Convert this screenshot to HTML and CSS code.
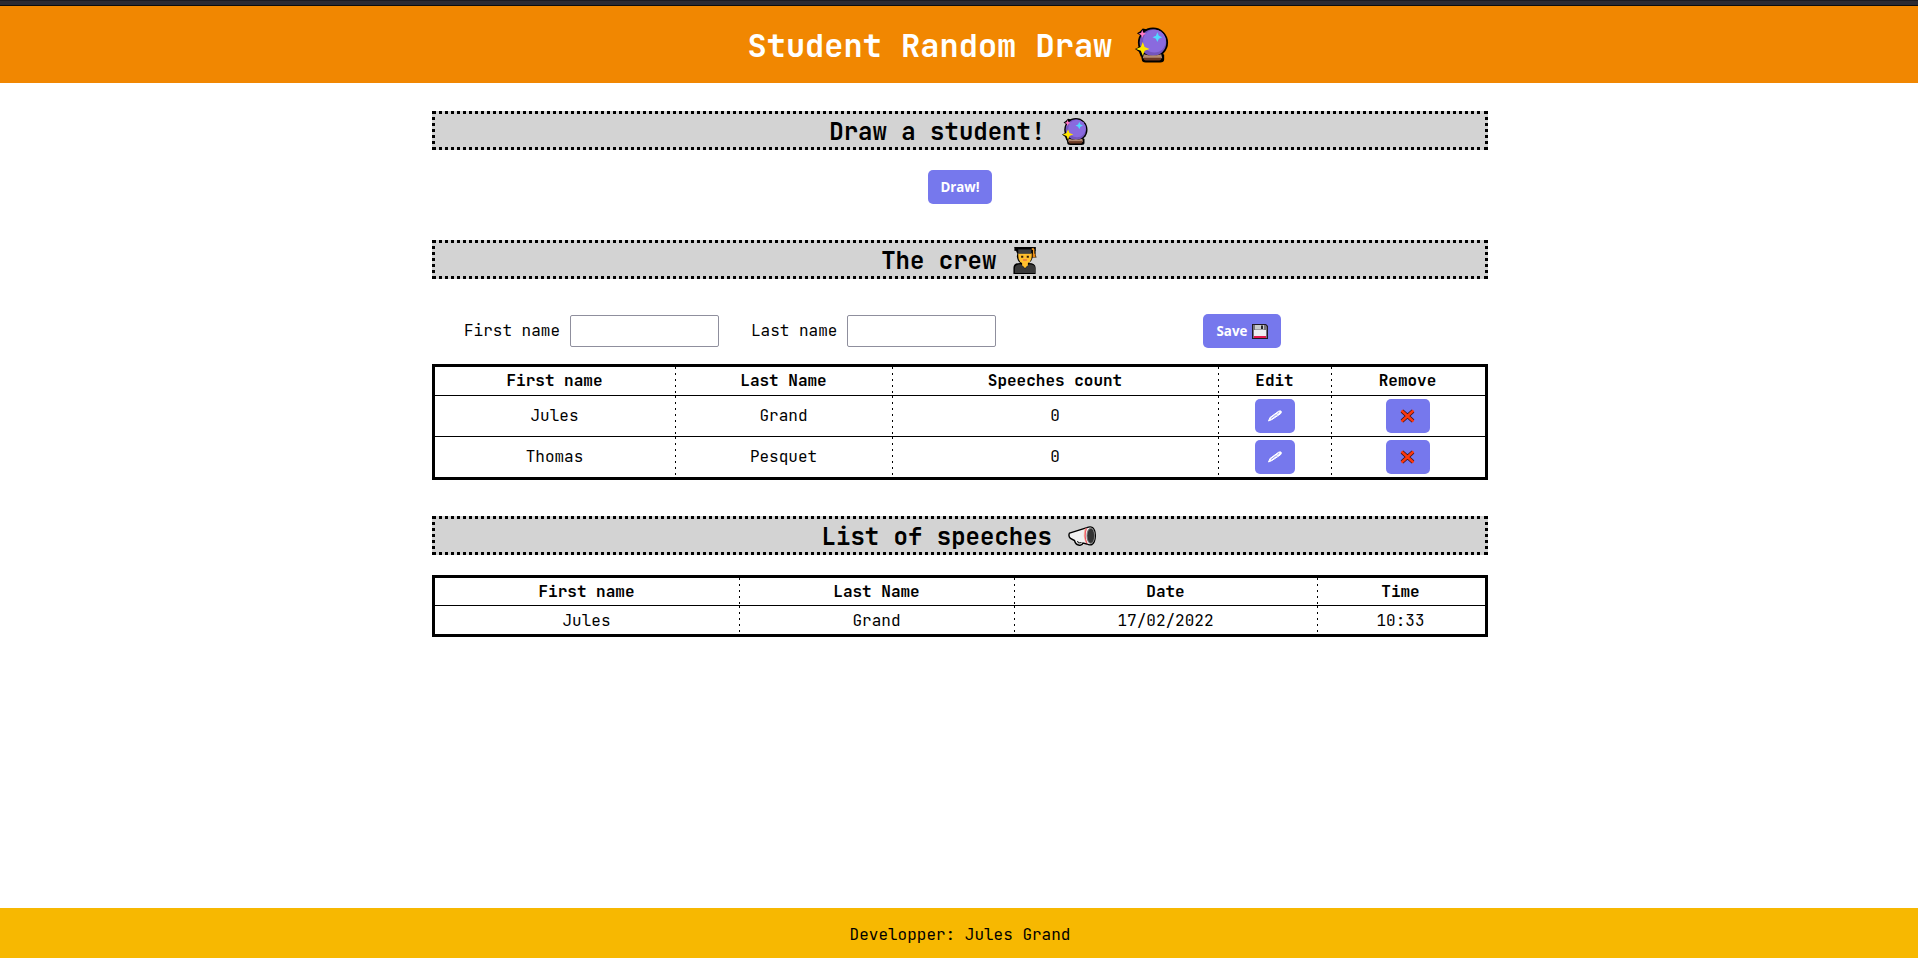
FILE: index.html
```
<!DOCTYPE html>
<html lang="en">
<head>
<meta charset="utf-8">
<title>Student Random Draw</title>
<link rel="stylesheet" href="styles.css">
</head>
<body>
<svg class="defs" aria-hidden="true">
  <symbol id="ball" viewBox="0 0 36 36">
    <path d="M6 28l3-2h18l3 2v5q0 3-4 3H11q-4 0-4-3z" fill="#000"/>
    <circle cx="18.500" cy="15.500" r="15.500" fill="#000"/>
    <path d="M0 22l4-2 2-5 5 1 3 6-5 4-3 4-2-5zM2 6l3-2 3-3 5 1-5 8z" fill="#000"/>
    <circle cx="18.500" cy="15.500" r="13.700" fill="#7455be"/>
    <circle cx="20" cy="14" r="11.700" fill="#8a6ade"/>
    <path d="M9 27.500q9 2.500 18 0l1 4H8z" fill="#b58b70"/>
    <path d="M9 31h18v1.500q0 1.500-2 1.500H11q-2 0-2-1.500z" fill="#6d3922"/>
    <path d="M8 15l2 5 5 2-5 2-2 5-2-5-5-2 5-2z" fill="#ffe500"/>
    <path d="M7.500 2.500l1.200 2.800 2.800 1.200-2.800 1.200-1.200 2.800-1.200-2.800-2.800-1.200 2.800-1.200z" fill="#ff78c4"/>
    <path d="M23 5l1.500 3.500L28 10l-3.500 1.500L23 15l-1.500-3.500L18 10l3.500-1.500z" fill="#50d8ff"/>
  </symbol>
  <symbol id="student" viewBox="0 0 24 28">
    <path d="M1 0h22v8l1 3h-4q-1 4-4 5.500 7 0 7 5V28H0v-6.500q0-5 7-5-3-2-3.500-7L4 7z" fill="#000"/>
    <path d="M1 0h22v4H1z" fill="#000"/>
    <path d="M5 6.500h14V9q0 8-7 8T5 9z" fill="#ffbf2e"/>
    <path d="M9 16h6v3l-3 3-3-3z" fill="#ffbf2e"/>
    <path d="M1.500 27v-5q0-4 6.500-4l4 4.500 4-4.500q6.500 0 6.500 4v5z" fill="#383838"/>
    <path d="M5 2.500h13.500V7H5z" fill="#404040"/>
    <path d="M8 9.200h2.200v2H8zm5.800 0H16v2h-2.200z" fill="#301c08"/>
    <path d="M10 13.500h4" stroke="#e8604c" stroke-width="1.200"/>
    <path d="M21 2v5.500M19 2.500l2-1" stroke="#f59b20" stroke-width="1.500"/>
    <path d="M20 7h2.500l.5 3.500h-3z" fill="#e88a18"/>
  </symbol>
  <symbol id="horn" viewBox="0 0 28 20">
    <path d="M1.500 7.200L19 1.700q3-1.500 5.500-.2 3 2.500 2.800 9-.3 6-3.300 8-2.500 1-5-.5L15 17q-1 3-4.500 2-3-.5-4-4.500l-4-2Q0 10 1.500 7.200z" fill="#f2f2f2" stroke="#000" stroke-width="1.400"/>
    <path d="M16.500 3q-2 7 1 13.500l2 1q-3-6-.5-15.500z" fill="#f3b69b"/>
    <path d="M18.500 2q-3 8 .500 15.500" stroke="#ee345d" stroke-width=".8" fill="none"/>
    <ellipse cx="22.800" cy="9.800" rx="3.800" ry="7.600" fill="#333" stroke="#777"/>
    <path d="M9.500 15l1 2 3-.4" stroke="#000" fill="none"/>
  </symbol>
  <symbol id="floppy" viewBox="0 0 16 15">
    <path d="M0 0h14l2 2v13H0z" fill="#201923"/>
    <path d="M1 1h12.500L15 2.500V14H1z" fill="#77737c"/>
    <path d="M3 1h9v4.500H3z" fill="#c9cccc"/>
    <path d="M9 1.500h2V5H9z" fill="#27272c"/>
    <path d="M2 6h12v6H2z" fill="#eeeef0"/>
    <path d="M2 12h12v2H2z" fill="#e2184c"/>
  </symbol>
  <symbol id="pen" viewBox="0 0 14 12">
    <path d="M.500 11l1.500-3.500L10.500 1.300q2-.9 2.700 0 .5 1.200-.7 2.500L4 9.500z" fill="#fff" stroke="#fff"/>
    <path d="M2.800 8.700L8 4.800l1.300.2M9.500 3.500l1.800-1.200" stroke="#7678ed" stroke-width=".8" fill="none"/>
  </symbol>
  <symbol id="cross" viewBox="0 0 15 14">
    <path d="M2 2l11 10M13 2L2 12" stroke="#30141c" stroke-width="4"/>
    <path d="M1.500 1.500l12 11M13.500 1.500l-12 11" stroke="#fa3810" stroke-width="2.500"/>
  </symbol>
</svg>
<div class="strip"></div>
<header class="top"><h1>Student Random Draw <svg class="ball-lg"><use href="#ball"/></svg></h1></header>
<main class="content">
  <section class="draw">
    <h2>Draw a student! <svg class="ball-md"><use href="#ball"/></svg></h2>
    <button class="btn draw-btn">Draw!</button>
  </section>
  <section class="crew">
    <h2>The crew <svg class="student"><use href="#student"/></svg></h2>
    <form class="form">
      <label class="field"><span>First name</span><input type="text"></label>
      <label class="field"><span>Last name</span><input type="text"></label>
      <button type="button" class="btn save">Save <svg class="floppy"><use href="#floppy"/></svg></button>
    </form>
    <table class="grid crew-grid">
      <colgroup><col class="c-first"><col class="c-last"><col class="c-count"><col class="c-edit"><col></colgroup>
      <tr><th>First name</th><th>Last Name</th><th>Speeches count</th><th>Edit</th><th>Remove</th></tr>
      <tr><td>Jules</td><td>Grand</td><td>0</td><td class="action"><button class="btn edit"><svg class="pen"><use href="#pen"/></svg></button></td><td class="action"><button class="btn remove"><svg class="cross"><use href="#cross"/></svg></button></td></tr>
      <tr><td>Thomas</td><td>Pesquet</td><td>0</td><td class="action"><button class="btn edit"><svg class="pen"><use href="#pen"/></svg></button></td><td class="action"><button class="btn remove"><svg class="cross"><use href="#cross"/></svg></button></td></tr>
    </table>
  </section>
  <section class="speeches">
    <h2>List of speeches <svg class="horn"><use href="#horn"/></svg></h2>
    <table class="grid speech-grid">
      <colgroup><col class="s-first"><col class="s-last"><col class="s-date"><col></colgroup>
      <tr><th>First name</th><th>Last Name</th><th>Date</th><th>Time</th></tr>
      <tr><td>Jules</td><td>Grand</td><td>17/02/2022</td><td>10:33</td></tr>
    </table>
  </section>
</main>
<footer class="foot">Developper: Jules Grand</footer>
</body>
</html>
```
FILE: styles.css
```
* { box-sizing: border-box; }
body {
  margin: 0;
  height: 958px;
  display: flex;
  flex-direction: column;
  background: #fff;
  color: #000;
  font: 16px/21px "JetBrains Mono", "DejaVu Sans Mono", monospace;
}
.defs { position: absolute; width: 0; height: 0; }
.strip { height: 6px; flex: none; background: #2b2a33; border-top: 1px solid #1c1b22; border-bottom: 1px solid #0c0c0d; }
.top { height: 77px; flex: none; background: #f18701; color: #fff; }
h1, h2 { margin: 0; display: flex; justify-content: center; align-items: center; white-space: pre; }
h1 { height: 77px; padding-top: 2px; font-size: 32px; line-height: 42px; }
.ball-lg { width: 35px; height: 36px; margin: 0 1px 2px 3px; }
.content { width: 1058px; margin: 28px auto 0; padding: 0 0 0 2px; flex: 1; }
h2 { height: 39px; padding-top: 2px; border: 3px dotted #000; background: #d3d3d3; font-size: 24px; line-height: 32px; }
h2 svg { margin: 0 2px 1px 2px; }
.ball-md { width: 27px; height: 27px; }
.student { width: 24px; height: 27px; }
.horn { width: 28px; height: 20px; }
.btn {
  display: flex; align-items: center; justify-content: center;
  height: 34px; padding: 0; border: 0; border-radius: 5px;
  background: #7678ed; color: #fff;
  font: bold 13.333px/18px "Open Sans", sans-serif;
}
.draw-btn { width: 64px; margin: 20px auto 36px; }
.form { display: flex; height: 34px; margin: 35px 0 16px; padding-left: 32px; align-items: center; }
.field { display: flex; align-items: center; gap: 10px; margin-right: 32px; white-space: nowrap; }
.field span { padding-bottom: 2px; }
.field input { width: 149px; height: 32px; border: 1px solid #8f8f9d; border-radius: 2px; background: #fff; padding: 0; margin: 0; }
.save { width: 78px; margin-left: 175px; gap: 5px; }
.floppy { width: 16px; height: 15px; }
.grid { width: 1056px; border: 3px solid #000; border-spacing: 0; table-layout: fixed; text-align: center; }
.grid th, .grid td { padding: 0 2px 0 0; }
.crew-grid th, .crew-grid td:not(.action) { padding-bottom: 2px; }
.grid tr > *:not(:last-child) {
  background: repeating-linear-gradient(#000 0 2px, transparent 2px 6px) right top / 1px 100% no-repeat;
}
.grid tr:not(:last-child) > * { border-bottom: 1px solid #000; }
.crew-grid { height: 116px; }
.crew-grid th { height: 29px; }
.crew-grid td { height: 41px; }
.crew-grid tr:last-child td { height: 40px; }
.c-first { width: 241px; }
.c-last { width: 217px; }
.c-count { width: 326px; }
.c-edit { width: 113px; }
.edit { width: 40px; margin: 0 auto; }
.remove { width: 44px; margin: 0 auto; }
.pen { width: 14px; height: 12px; }
.cross { width: 15px; height: 14px; }
.speeches { margin-top: 36px; }
.speech-grid { margin-top: 20px; height: 62px; }
.speech-grid th, .speech-grid td { height: 28px; }
.s-first { width: 305px; }
.s-last { width: 275px; }
.s-date { width: 303px; }
.foot { height: 50px; flex: none; background: #f7b801; text-align: center; padding: 16px 0 0 2px; }
```
